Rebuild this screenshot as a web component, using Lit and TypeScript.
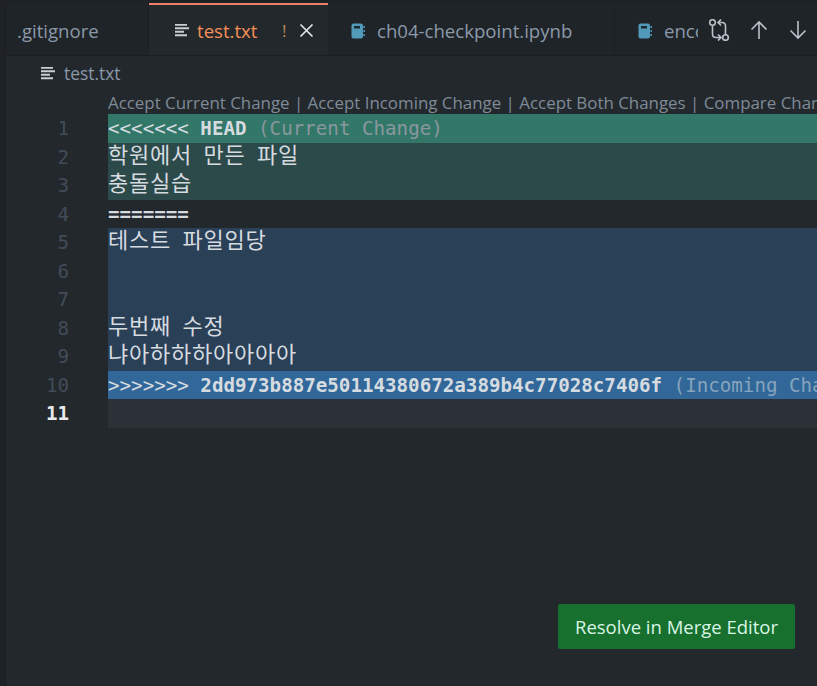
import { LitElement, html, css, svg } from "lit";
import { customElement } from "lit/decorators.js";

const lines = [
  { cls: "cur-h", html: html`<span class="thin">&lt;&lt;&lt;&lt;&lt;&lt;&lt;</span> <span class="b">HEAD</span> <span class="hint">(Current Change)</span>` },
  { cls: "cur", html: html`<span class="ko">학원에서 만든 파일</span>` },
  { cls: "cur", html: html`<span class="ko">충돌실습</span>` },
  { cls: "", html: html`<span class="b">=======</span>` },
  { cls: "inc", html: html`<span class="ko">테스트 파일임당</span>` },
  { cls: "inc", html: html`` },
  { cls: "inc", html: html`` },
  { cls: "inc", html: html`<span class="ko">두번째 수정</span>` },
  { cls: "inc", html: html`<span class="ko">냐아하하하아아아아</span>` },
  { cls: "inc-h", html: html`<span class="thin">&gt;&gt;&gt;&gt;&gt;&gt;&gt;</span> <span class="b">2dd973b887e50114380672a389b4c77028c7406f</span> <span class="hint">(Incoming Change)</span>` },
  { cls: "active", html: html`` },
];

const fileIcon = svg`<path d="M0 0.8h12M0 4.3h14M0 7.8h9M0 11.3h12" fill="none" stroke="#c9ced3" stroke-width="2"/>`;

const nbIcon = svg`<rect x="0.5" y="0.5" width="11.5" height="15" rx="2" fill="#519aba"/><rect x="3" y="3" width="6" height="2.5" fill="#1f2a33"/><path d="M13.2 3v2M13.2 7v2M13.2 11v2" stroke="#519aba" stroke-width="1.5"/>`;

@customElement("app-root")
export class AppRoot extends LitElement {
  static styles = css`
    :host { display: block; width: 817px; height: 686px; overflow: hidden; background: #23282d; font-family: "Open Sans", "Noto Sans", sans-serif; }
    .frame { height: 686px; display: flex; flex-direction: column; box-sizing: border-box; padding-top: 3px; background: #1e2227; }
    .shell { flex: 1; display: flex; flex-direction: column; margin-left: 5px; background: #23282d; border-left: 1px solid #1b1f23; min-height: 0; }
    .tabs { height: 53px; flex: none; display: flex; background: #1f2429; border-bottom: 1px solid #1b1f23; box-sizing: border-box; position: relative; overflow: hidden; }
    .tab { display: flex; align-items: center; flex: none; box-sizing: border-box; padding-top: 3px; color: #8b99a8; font-size: 18.6px; border-right: 1px solid #1c2024; }
    .t1 { width: 143px; padding-left: 11px; }
    .t2 { width: 179px; padding-left: 26px; padding-top: 0; background: #23282d; border-top: 2px solid #f0806a; margin-bottom: -1px; border-right: none; color: #f58f55; }
    .t3 { width: 287px; padding-left: 23px; }
    .t4 { width: 90px; padding-left: 23px; border-right: none; overflow: hidden; }
    .t4 span { width: 34px; overflow: hidden; white-space: nowrap; }
    .ico { flex: none; margin-right: 11px; }
    .t2 .ico { margin-top: -1px; margin-right: 8px; }
    .t2 .name { flex: 1; }
    .mark { color: #b98a55; font-size: 17px; width: 17px; }
    .close { margin-right: 14px; flex: none; }
    .actions { position: absolute; right: 0; top: 0; bottom: 0; width: 119px; display: flex; align-items: center; gap: 19px; padding-left: 10px; padding-top: 1px; box-sizing: border-box; background: #1f2429; }
    .actions svg { flex: none; }
    .crumb { height: 36px; flex: none; display: flex; align-items: center; box-sizing: border-box; padding: 0 0 2px 35px; color: #8b99a8; font-size: 17.4px; }
    .crumb svg { margin-right: 9px; flex: none; }
    .editor { flex: 1; position: relative; display: grid; grid-template-columns: 102px 1fr; min-height: 0; }
    .gutter { padding-top: 22px; }
    .num { height: 28.5px; line-height: 29.5px; width: 63px; text-align: right; font-family: "DejaVu Sans Mono", monospace; font-size: 19.18px; color: #424c58; }
    .num.on { color: #e8eaed; font-weight: bold; }
    .code { min-width: 0; overflow: hidden; }
    .lens { height: 22px; line-height: 22px; font-size: 16.9px; color: #7f8b98; white-space: nowrap; }
    .line { height: 28.5px; line-height: 29.5px; font-family: "DejaVu Sans Mono", monospace; font-size: 19.18px; color: #d6dbe0; white-space: pre; }
    .cur, .inc { line-height: 27.5px; }
    .ko { font-family: "Liberation Mono", "Noto Sans CJK KR", monospace; font-size: 22px; letter-spacing: 0.75px; word-spacing: -2.4px; }
    .b { font-weight: bold; }
    .hint { color: #8b989f; }
    .cur-h { background: #327768; }
    .cur { background: #2d4a4a; }
    .inc { background: #2a4057; }
    .inc-h { background: #316899; }
    .inc-h .hint { color: #86a4bd; }
    .active { background: #2c3138; }
    .resolve { position: absolute; right: 22px; bottom: 37px; width: 237px; height: 45px; display: flex; align-items: center; justify-content: center; background: #17702e; color: #d9f6e4; border-radius: 2px; font-size: 18.5px; }
  `;

  render() {
    return html`<div class="frame"><div class="shell">
      <div class="tabs">
        <div class="tab t1"><span>.gitignore</span></div>
        <div class="tab t2">
          <svg class="ico" width="14" height="13" viewBox="0 0 14 13">${fileIcon}</svg>
          <span class="name">test.txt</span>
          <span class="mark">!</span>
          <svg class="close" width="15" height="15" viewBox="0 0 15 15"><path d="M1.5 1.5l12 12M13.5 1.5l-12 12" stroke="#dfe6ea" stroke-width="1.7" fill="none"/></svg>
        </div>
        <div class="tab t3">
          <svg class="ico" width="15" height="16" viewBox="0 0 15 16">${nbIcon}</svg>
          <span>ch04-checkpoint.ipynb</span>
        </div>
        <div class="tab t4">
          <svg class="ico" width="15" height="16" viewBox="0 0 15 16">${nbIcon}</svg>
          <span>encoding.ipynb</span>
        </div>
        <div class="actions">
          <svg width="22" height="22" viewBox="0 0 22 22" fill="none" stroke="#b9c0c7" stroke-width="1.6">
            <circle cx="4.5" cy="3.5" r="2.8"/>
            <circle cx="17.5" cy="18.5" r="2.8"/>
            <path d="M4.5 6.5V15c0 2 1 3.5 3.5 3.5h4M10 15.5l3 3-3 3"/>
            <path d="M17.5 15.5V7c0-2-1-3.5-3.5-3.5h-3M13 .5l-3 3 3 3"/>
          </svg>
          <svg width="20" height="20" viewBox="0 0 20 20" fill="none" stroke="#b9c0c7" stroke-width="1.6"><path d="M10 19V2M2.5 9.5L10 2l7.5 7.5"/></svg>
          <svg width="20" height="20" viewBox="0 0 20 20" fill="none" stroke="#b9c0c7" stroke-width="1.6"><path d="M10 1v17M2.5 10.5L10 18l7.5-7.5"/></svg>
        </div>
      </div>
      <div class="crumb">
        <svg width="14" height="13" viewBox="0 0 14 13">${fileIcon}</svg>
        <span>test.txt</span>
      </div>
      <div class="editor">
        <div class="gutter">
          ${lines.map((_, i) => html`<div class="num ${i === 10 ? "on" : ""}">${i + 1}</div>`)}
        </div>
        <div class="code">
          <div class="lens">Accept Current Change | Accept Incoming Change | Accept Both Changes | Compare Changes</div>
          ${lines.map((l) => html`<div class="line ${l.cls}">${l.html}</div>`)}
        </div>
        <div class="resolve">Resolve in Merge Editor</div>
      </div>
    </div></div>`;
  }
}
